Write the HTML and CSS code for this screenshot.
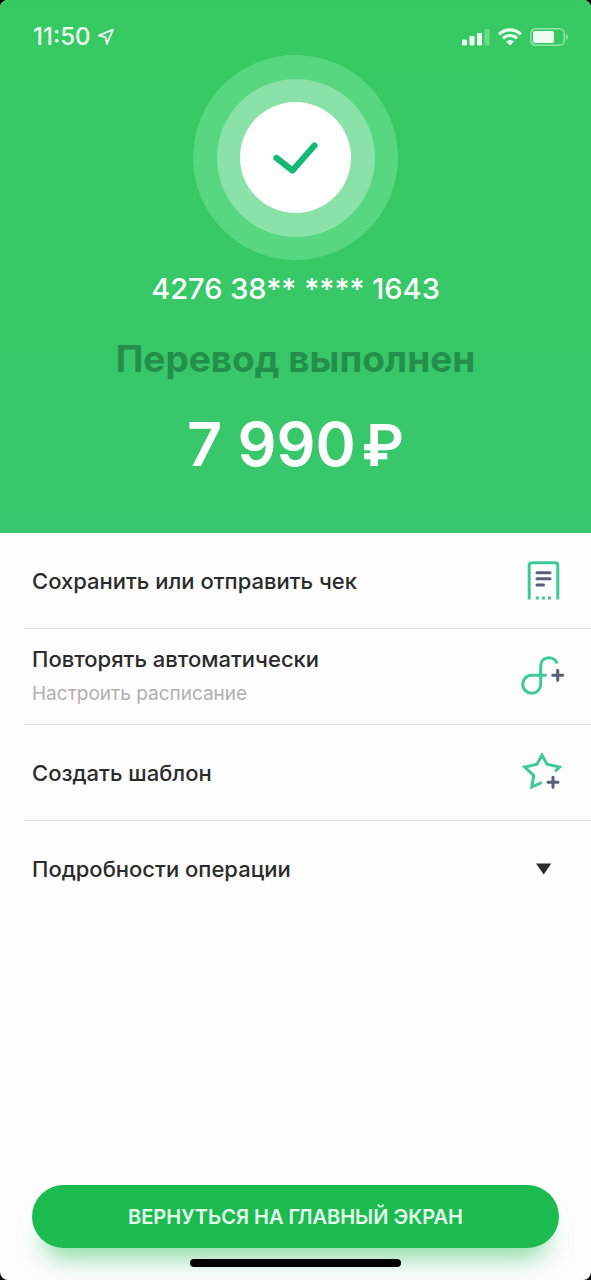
FILE: index.html
```html
<!DOCTYPE html>
<html lang="ru">
<head>
<meta charset="utf-8">
<meta name="viewport" content="width=device-width, initial-scale=1">
<title>Перевод выполнен</title>
<link rel="stylesheet" href="styles.css">
</head>
<body>
<div class="screen">
  <header class="hero">
    <div class="status-bar">
      <div class="status-left">
        <time class="clock">11:50</time>
        <svg class="location" width="18" height="18" viewBox="0 0 18 18" aria-hidden="true"><path d="M16 1.500 1.800 7.600 8.400 9.200 9.900 15.800Z" fill="none" stroke="currentColor" stroke-width="1.900" stroke-linejoin="round"/></svg>
      </div>
      <div class="status-right">
        <svg width="28" height="18" viewBox="0 0 28 18" fill="currentColor" aria-hidden="true"><rect x="0" y="11.500" width="5" height="6" rx="1.200"/><rect x="7.500" y="8" width="5" height="9.500" rx="1.200"/><rect x="15" y="5" width="5" height="12.500" rx="1.200"/><rect x="22.500" y="1" width="5" height="16.500" rx="1.200" opacity=".3"/></svg>
        <svg width="24" height="18" viewBox="0 0 24 18" aria-hidden="true"><g fill="none" stroke="currentColor" stroke-width="3.100"><path d="M1.100 6.300a15.700 15.700 0 0 1 21.800 0"/><path d="M5 10.400a10 10 0 0 1 14 0"/></g><path d="M8 13.500a5.800 5.800 0 0 1 8 0L12 17.600Z" fill="currentColor"/></svg>
        <svg width="39" height="18" viewBox="0 0 39 18" aria-hidden="true"><rect x=".8" y=".8" width="33.400" height="16.400" rx="4.500" fill="none" stroke="currentColor" stroke-width="1.500" opacity=".5"/><rect x="3" y="3" width="21" height="12" rx="2" fill="currentColor"/><path d="M36 5.800q2 1 2 3.200t-2 3.200Z" fill="currentColor" opacity=".5"/></svg>
      </div>
    </div>
    <div class="ring ring-outer">
      <div class="ring ring-middle">
        <div class="ring ring-inner">
          <svg width="46" height="34" viewBox="0 0 46 34" aria-hidden="true"><path d="M3.500 17 19.500 29.500 41.500 4.500" fill="none" stroke="#12b873" stroke-width="6.200" stroke-linecap="round" stroke-linejoin="round"/></svg>
        </div>
      </div>
    </div>
    <p class="card-number">4276 38** **** 1643</p>
    <h1 class="title">Перевод выполнен</h1>
    <p class="amount"><span>7 990</span><span class="currency">₽</span></p>
  </header>

  <main class="actions">
    <button class="action" type="button">
      <span class="label">Сохранить или отправить чек</span>
      <svg class="icon" viewBox="0 0 48 48" aria-hidden="true"><path class="green" d="M10.200 42.500V8.500q0-2.800 2.800-2.800H36q2.800 0 2.800 2.800V42.500"/><path class="green" d="M16.800 41h3M22.900 41h3M29 41h3"/><path class="slate" d="M18 15.800H31M18 21.800H31M18 28.100H24.500"/></svg>
    </button>
    <button class="action" type="button">
      <span class="label">Повторять автоматически<span class="hint">Настроить расписание</span></span>
      <svg class="icon" viewBox="0 0 48 48" aria-hidden="true"><path class="green" d="M38.300 10.500C36.500 6.500 33.500 4.700 30 4.700c-5 0-8.300 3.600-8.300 8.600V31a9 9 0 1 1-9-8.800H27.700"/><path class="slate" d="M38.700 17.200v10M33.700 22.200h10"/></svg>
    </button>
    <button class="action" type="button">
      <span class="label">Создать шаблон</span>
      <svg class="icon" viewBox="0 0 48 48" aria-hidden="true"><path class="green" d="M36 22.300 40.500 18 28 15.100 23 6 18 15.100 5.800 18 14.700 26.500 12.800 38 22.700 33.500"/><path class="slate" d="M34 28.200v10M29 33.200h10"/></svg>
    </button>
    <button class="action" type="button" aria-expanded="false">
      <span class="label">Подробности операции</span>
      <svg class="icon" viewBox="0 0 48 48" aria-hidden="true"><path d="M17 18.500H32.300L24.700 29.500Z" fill="#2b2b2b"/></svg>
    </button>
  </main>

  <footer class="footer">
    <button class="primary" type="button">ВЕРНУТЬСЯ НА ГЛАВНЫЙ ЭКРАН</button>
    <div class="home-indicator"></div>
  </footer>
</div>
</body>
</html>
```
FILE: styles.css
```css
* {
  box-sizing: border-box;
}

body {
  margin: 0;
  background: #000;
  font-family: Inter, "Liberation Sans", sans-serif;
}

button {
  border: 0;
  font: inherit;
  cursor: pointer;
}

.screen {
  display: flex;
  flex-direction: column;
  min-height: 100vh;
  overflow: hidden;
  border-radius: 8px;
  background: #fdfdfd;
}

.hero {
  display: flex;
  flex-direction: column;
  align-items: center;
  padding-bottom: 50px;
  background: linear-gradient(#37c961, #38c76c);
  color: #fff;
}

.status-bar {
  display: flex;
  justify-content: space-between;
  align-items: center;
  align-self: stretch;
  height: 55px;
  padding: 18px 22px 0 33px;
  color: #ecfff2;
}

.status-left {
  display: flex;
  align-items: center;
  gap: 6px;
}

.status-right {
  display: flex;
  align-items: center;
  gap: 8px;
}

.clock {
  font-size: 24px;
  font-weight: 500;
  line-height: 28px;
}

.ring {
  display: flex;
  align-items: center;
  justify-content: center;
  border-radius: 50%;
}

.ring-outer {
  width: 205px;
  height: 205px;
  background: #57d780;
}

.ring-middle {
  width: 158px;
  height: 158px;
  background: #8ae2a8;
}

.ring-inner {
  width: 111px;
  height: 111px;
  background: #fff;
}

.card-number {
  margin: 9px 0 0;
  font-size: 29px;
  font-weight: 500;
  line-height: 40px;
}

.title {
  margin: 24px 0 0;
  color: #248f4b;
  font-size: 37px;
  font-weight: 700;
  line-height: 52px;
}

.amount {
  display: flex;
  align-items: baseline;
  gap: 6px;
  margin: 21px 0 0;
  font-size: 61px;
  font-weight: 600;
  line-height: 76px;
}

.currency {
  font-size: 58px;
}

.actions {
  flex: 1;
}

.action {
  display: flex;
  align-items: center;
  justify-content: space-between;
  width: calc(100% - 24px);
  height: 96px;
  margin-left: 24px;
  padding: 0 24px 0 8px;
  border-bottom: 1px solid #dcdcdc;
  background: none;
  color: #2b2b2b;
  text-align: left;
}

.action:last-child {
  border-bottom: 0;
}

.label {
  font-size: 22px;
  font-weight: 500;
  line-height: 32px;
}

.hint {
  display: block;
  margin-top: 3px;
  color: #b0b0b0;
  font-size: 19px;
  font-weight: 400;
}

.icon {
  flex: none;
  width: 48px;
  height: 48px;
  fill: none;
}

.green {
  stroke: #3fc99a;
  stroke-width: 3;
}

.slate {
  stroke: #585d78;
  stroke-width: 3;
  stroke-linecap: round;
}

.footer {
  display: flex;
  flex-direction: column;
  align-items: center;
  gap: 11px;
  padding: 0 32px 13px;
}

.primary {
  width: 100%;
  height: 63px;
  border-radius: 32px;
  background: #1bbb50;
  box-shadow: 0 22px 24px -12px rgba(27, 187, 80, .5);
  color: #e4fced;
  font-size: 20px;
  font-weight: 600;
}

.home-indicator {
  position: relative;
  width: 40%;
  height: 8px;
  border-radius: 4px;
  background: #000;
}
```
